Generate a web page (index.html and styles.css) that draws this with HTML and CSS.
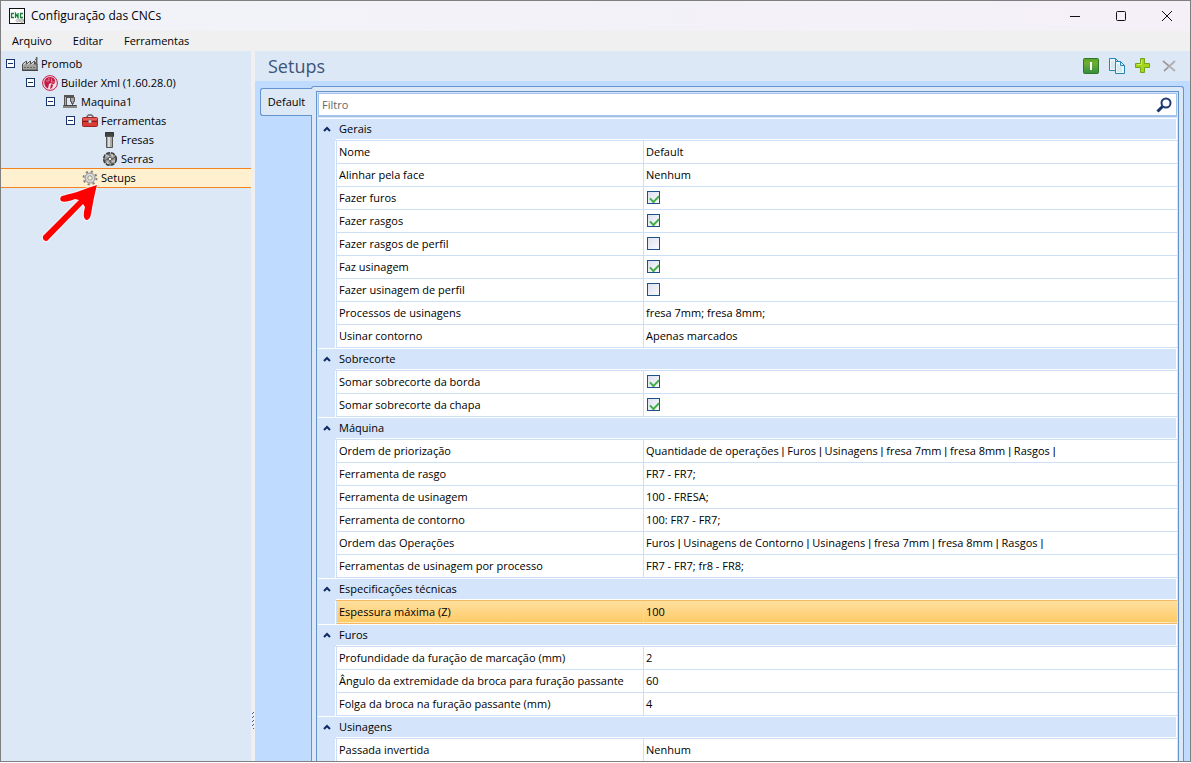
FILE: index.html
```html
<!DOCTYPE html>
<html lang="pt-BR">
<head>
<meta charset="utf-8">
<title>Configuração das CNCs</title>
<link rel="stylesheet" href="styles.css">
</head>
<body>
<div class="window">
  <header class="titlebar">
    <svg class="app-icon" viewBox="0 0 16 16"><rect x=".5" y=".5" width="15" height="15" fill="#fff" stroke="#111"/><path d="M5 5.500H2.500V9.500H5M6.500 10V5.500L9 9.500V5M14 5.500H11.500V9.500H14" fill="none" stroke="#15803a" stroke-width="1.300"/><circle cx="12.500" cy="12.500" r="2" fill="#ccc" stroke="#888" stroke-dasharray="1 1"/><circle cx="8.500" cy="12.500" r="1.500" fill="#ddd" stroke="#999" stroke-dasharray="1 1"/></svg>
    <h1 class="caption">Configuração das CNCs</h1>
    <div class="window-buttons">
      <button aria-label="Minimizar"><svg viewBox="0 0 12 12"><path d="M1 6.500H11" stroke="#111"/></svg></button>
      <button aria-label="Maximizar"><svg viewBox="0 0 12 12"><rect x="1.500" y="1.500" width="9" height="9" rx="1" fill="none" stroke="#111"/></svg></button>
      <button aria-label="Fechar"><svg viewBox="0 0 12 12"><path d="M1 1L11 11M11 1L1 11" stroke="#111"/></svg></button>
    </div>
  </header>
  <nav class="menu"><button>Arquivo</button><button>Editar</button><button>Ferramentas</button></nav>
  <div class="body">
    <aside class="sidebar">
      <ul class="tree">
        <li class="node d0"><button class="toggle" aria-label="Recolher Promob"></button><svg viewBox="0 0 16 16"><path d="M13 1h2.500v13H13z" fill="#666"/><path d="M13.500 1v5" stroke="#ccc" stroke-dasharray="2 1"/><path d="M.5 14V8l4-3v3l4-3v3l4-3v3H15v6z" fill="#a2a29e" stroke="#505050"/><path d="M1.500 8.500l2.500-2M5.500 8.500l2.500-2M9.500 8.500l2.500-2" stroke="#eee"/><path d="M2 11.500h12" stroke="#666" stroke-dasharray="2 1"/><path d="M0 14.500h16" stroke="#444"/></svg><span>Promob</span></li>
        <li class="node d1"><button class="toggle" aria-label="Recolher Builder Xml"></button><svg viewBox="0 0 16 16"><circle cx="8" cy="8" r="7.400" fill="#f3dfe8" stroke="#c31c46"/><path d="M8 2C4 2 2 5 2.300 8C2.500 11 4 12.500 6 13.500L7 9L9 8L11 9.500L13 8C14 5 12 2 8 2z" fill="#c31c46"/><path d="M7 3v3H4M9.500 3.500v3.500H13" stroke="#ee9aac" stroke-width=".8" fill="none"/><path d="M9 9l2 1-1 3-2 1z" fill="#c31c46"/></svg><span>Builder Xml (1.60.28.0)</span></li>
        <li class="node d2"><button class="toggle" aria-label="Recolher Maquina1"></button><svg viewBox="0 0 16 16"><path d="M2 1H12V4H5V11H2z" fill="#555"/><path d="M3.500 3V11" stroke="#aaa"/><path d="M8.500 3.500h4v4h-1v2h-2v-2h-1z" fill="#aaa" stroke="#555"/><path d="M10.500 9v2" stroke="#555"/><path d="M2 11.500h12M1.500 13.500v-2h13v2" fill="none" stroke="#444"/><path d="M1 13h14" stroke="#888" stroke-width="2"/></svg><span>Maquina1</span></li>
        <li class="node d3"><button class="toggle" aria-label="Recolher Ferramentas"></button><svg viewBox="0 0 16 16"><path d="M5 5V3.500L6.500 2h3L11 3.500V5" fill="none" stroke="#666" stroke-width="1.500"/><rect x=".5" y="4.500" width="15" height="9" rx="1" fill="#dc3a37" stroke="#9d2525"/><path d="M1 8.500h14" stroke="#811c1c"/><path d="M1 6h14" stroke="#f28077"/><path d="M6.500 7h3v3h-3z" fill="#ddd" stroke="#777" stroke-width=".6"/></svg><span>Ferramentas</span></li>
        <li class="node d4"><svg viewBox="0 0 16 16"><path d="M3.500 .5h8v4h-8z" fill="#444" stroke="#333"/><path d="M4.500 4.500h6v11h-6z" fill="#aaa" stroke="#555"/><path d="M6 5h2v10H6z" fill="#ddd"/></svg><span>Fresas</span></li>
        <li class="node d4"><svg viewBox="0 0 16 16"><circle cx="8" cy="8" r="6.300" fill="#999" stroke="#3a3a3a" stroke-width="1.600" stroke-dasharray="4 1"/><path d="M3 5q3-1 4 1M10 3q1 3-1 4M13 10q-3 1-4-1M6 13q-1-3 1-4" fill="none" stroke="#e0e0e0"/><path d="M5 3q3 0 3 2M13 6q-1 2-3 2M11 13q-3-1-3-3M3 10q1-2 3-2" fill="none" stroke="#555"/><circle cx="8" cy="8" r="1.800" fill="#eee" stroke="#555"/></svg><span>Serras</span></li>
        <li class="node d3 selected"><svg viewBox="0 0 16 16"><circle cx="8" cy="8" r="6.500" fill="none" stroke="#858585" stroke-width="2" stroke-dasharray="2.200 2.900"/><circle cx="8" cy="8" r="5" fill="#d8d8d8" stroke="#929292"/><circle cx="8" cy="8" r="2.200" fill="#fff0d2" stroke="#999"/></svg><span>Setups</span></li>
      </ul>
      <svg class="pointer" viewBox="0 0 60 64"><path d="M57 4Q47 7 37 11Q25 14 22 15Q19 17 21 20Q25 22 35 18L39 19L3 55Q2 60 7 60L43 23L45 26Q42 37 46 39Q50 39 51 33Q54 15 57 4z" fill="#fd0000" stroke="#fff" stroke-opacity=".7" stroke-width="2" paint-order="stroke"/></svg>
    </aside>
    <div class="splitter"><svg viewBox="0 0 3 18"><path d="M0 3L2 1M0 7L2 5M0 11L2 9M0 15L2 13M0 19L2 17" stroke="#2467c0"/></svg></div>
    <main class="main">
      <div class="head">
        <h2>Setups</h2>
        <div class="tools">
          <button aria-label="Ativar"><svg viewBox="0 0 16 16"><defs><linearGradient id="g" x2="0" y2="1"><stop stop-color="#55a51f"/><stop offset=".3" stop-color="#70ae35"/><stop offset="1" stop-color="#2f8f3b"/></linearGradient></defs><rect x=".5" y=".5" width="15" height="15" rx="1" fill="url(#g)" stroke="#30752b"/><path d="M8 4v8" stroke="#fff" stroke-width="2"/></svg></button>
          <button aria-label="Copiar"><svg viewBox="0 0 16 16"><path d="M.5 .5h6l3 3v9h-9zM6.500 .5v3h3" fill="#edf6fb" stroke="#2386b5"/><path d="M2 4h3M2 6h5M2 8h5M2 10h5" stroke="#b8dbe7"/><path d="M6.500 3.500h5l4 4v8h-9zM11.500 3.500v4h4" fill="#edf6fb" stroke="#2386b5"/><path d="M8 7h2M8 9h5M8 11h5M8 13h5" stroke="#b8dbe7"/></svg></button>
          <button aria-label="Adicionar"><svg viewBox="0 0 16 16"><path d="M5.500 .5h4v5h5v4h-5v5h-4v-5h-5v-4h5z" fill="#a4d51c" stroke="#70a51a"/><path d="M6.500 2v4.500H2" fill="none" stroke="#d0ec68"/></svg></button>
          <button aria-label="Excluir"><svg viewBox="0 0 16 16"><path d="M2 3L14 13M14 3L3 13" stroke="#b2b2b2" stroke-width="2"/><path d="M2 3L8 8M3 13L7 9.500" stroke="#8c8c8c"/></svg></button>
        </div>
      </div>
      <div class="content">
        <div class="tabs"><button class="tab">Default</button></div>
        <section class="page">
          <div class="panel">
            <div class="filter"><input type="text" placeholder="Filtro" aria-label="Filtro"><button aria-label="Pesquisar"><svg viewBox="0 0 16 16"><path d="M7 9L1.500 14.500" stroke="#15326b" stroke-width="3"/><circle cx="10" cy="6" r="4.500" fill="#f7faff" stroke="#203c70" stroke-width="2"/></svg></button></div>
            <table class="grid">
              <colgroup><col class="c-gutter"><col class="c-name"><col></colgroup>
              <tbody>
              <tr class="cat"><td><button aria-label="Recolher Gerais"><svg viewBox="0 0 8 6"><path d="M1 5L4 2L7 5" fill="none" stroke="#0d2c68" stroke-width="2"/></svg></button></td><th colspan="2">Gerais</th></tr>
              <tr><td></td><th>Nome</th><td>Default</td></tr>
              <tr><td></td><th>Alinhar pela face</th><td>Nenhum</td></tr>
              <tr><td></td><th><label for="k1">Fazer furos</label></th><td><input id="k1" type="checkbox" checked></td></tr>
              <tr><td></td><th><label for="k2">Fazer rasgos</label></th><td><input id="k2" type="checkbox" checked></td></tr>
              <tr><td></td><th><label for="k3">Fazer rasgos de perfil</label></th><td><input id="k3" type="checkbox"></td></tr>
              <tr><td></td><th><label for="k4">Faz usinagem</label></th><td><input id="k4" type="checkbox" checked></td></tr>
              <tr><td></td><th><label for="k5">Fazer usinagem de perfil</label></th><td><input id="k5" type="checkbox"></td></tr>
              <tr><td></td><th>Processos de usinagens</th><td>fresa 7mm; fresa 8mm;</td></tr>
              <tr><td></td><th>Usinar contorno</th><td>Apenas marcados</td></tr>
              </tbody>
              <tbody>
              <tr class="cat"><td><button aria-label="Recolher Sobrecorte"><svg viewBox="0 0 8 6"><path d="M1 5L4 2L7 5" fill="none" stroke="#0d2c68" stroke-width="2"/></svg></button></td><th colspan="2">Sobrecorte</th></tr>
              <tr><td></td><th><label for="k6">Somar sobrecorte da borda</label></th><td><input id="k6" type="checkbox" checked></td></tr>
              <tr><td></td><th><label for="k7">Somar sobrecorte da chapa</label></th><td><input id="k7" type="checkbox" checked></td></tr>
              </tbody>
              <tbody>
              <tr class="cat"><td><button aria-label="Recolher Máquina"><svg viewBox="0 0 8 6"><path d="M1 5L4 2L7 5" fill="none" stroke="#0d2c68" stroke-width="2"/></svg></button></td><th colspan="2">Máquina</th></tr>
              <tr><td></td><th>Ordem de priorização</th><td>Quantidade de operações <span class="bar">|</span> Furos <span class="bar">|</span> Usinagens <span class="bar">|</span> fresa 7mm <span class="bar">|</span> fresa 8mm <span class="bar">|</span> Rasgos <span class="bar">|</span></td></tr>
              <tr><td></td><th>Ferramenta de rasgo</th><td>FR7 - FR7;</td></tr>
              <tr><td></td><th>Ferramenta de usinagem</th><td>100 - FRESA;</td></tr>
              <tr><td></td><th>Ferramenta de contorno</th><td>100: FR7 - FR7;</td></tr>
              <tr><td></td><th>Ordem das Operações</th><td>Furos <span class="bar">|</span> Usinagens de Contorno <span class="bar">|</span> Usinagens <span class="bar">|</span> fresa 7mm <span class="bar">|</span> fresa 8mm <span class="bar">|</span> Rasgos <span class="bar">|</span></td></tr>
              <tr><td></td><th>Ferramentas de usinagem por processo</th><td>FR7 - FR7; fr8 - FR8;</td></tr>
              </tbody>
              <tbody>
              <tr class="cat"><td><button aria-label="Recolher Especificações técnicas"><svg viewBox="0 0 8 6"><path d="M1 5L4 2L7 5" fill="none" stroke="#0d2c68" stroke-width="2"/></svg></button></td><th colspan="2">Especificações técnicas</th></tr>
              <tr class="active"><td></td><th>Espessura máxima (Z)</th><td>100</td></tr>
              </tbody>
              <tbody>
              <tr class="cat"><td><button aria-label="Recolher Furos"><svg viewBox="0 0 8 6"><path d="M1 5L4 2L7 5" fill="none" stroke="#0d2c68" stroke-width="2"/></svg></button></td><th colspan="2">Furos</th></tr>
              <tr><td></td><th>Profundidade da furação de marcação (mm)</th><td>2</td></tr>
              <tr><td></td><th>Ângulo da extremidade da broca para furação passante</th><td>60</td></tr>
              <tr><td></td><th>Folga da broca na furação passante (mm)</th><td>4</td></tr>
              </tbody>
              <tbody>
              <tr class="cat"><td><button aria-label="Recolher Usinagens"><svg viewBox="0 0 8 6"><path d="M1 5L4 2L7 5" fill="none" stroke="#0d2c68" stroke-width="2"/></svg></button></td><th colspan="2">Usinagens</th></tr>
              <tr><td></td><th>Passada invertida</th><td>Nenhum</td></tr>
              </tbody>
            </table>
          </div>
        </section>
      </div>
    </main>
  </div>
</div>
</body>
</html>
```
FILE: styles.css
```css
* { box-sizing: border-box; }
body { margin: 0; height: 100vh; padding-bottom: 1px; font: 11px/16px "Open Sans", "Noto Sans", sans-serif; color: #000; }
button { border: 0; padding: 0; background: none; font: inherit; color: inherit; }
svg { display: block; flex: none; }
h1, h2 { margin: 0; font-weight: 400; }

.window { display: flex; flex-direction: column; height: 100%; border: 1px solid #7f7f7f; overflow: hidden; }
.titlebar { display: flex; align-items: center; height: 30px; flex: none; padding-left: 8px; gap: 6px; background: linear-gradient(90deg, #f1f3f9, #f5f0f7); }
.app-icon { width: 16px; height: 16px; }
.caption { font-size: 12px; }
.window-buttons { display: flex; margin-left: auto; }
.window-buttons button { width: 46px; height: 28px; display: grid; place-items: center; }
.window-buttons svg { width: 12px; height: 12px; }
.menu { display: flex; gap: 21px; height: 20px; flex: none; padding-left: 11px; background: #f0f0f0; }

.body { display: flex; flex: 1; min-height: 0; }
.sidebar { position: relative; width: 250px; flex: none; background: #dde8f6; }
.tree { list-style: none; margin: 0; padding: 3px 0 0; }
.node { display: flex; align-items: center; height: 19px; }
.node svg { width: 16px; height: 16px; margin-right: 3px; }
.d0 { padding-left: 5px; }
.d1 { padding-left: 25px; }
.d2 { padding-left: 45px; }
.d3 { padding-left: 65px; }
.d4 { padding-left: 101px; }
.selected { height: 20px; padding-left: 81px; background: #fff0d0; border: solid #f5821f; border-width: 1px 0; }
.toggle { width: 9px; height: 9px; margin-right: 7px; border: 1px solid #17356b; background: linear-gradient(#17356b, #17356b) center / 5px 1px no-repeat #fff; }
.pointer { position: absolute; left: 39px; top: 130px; width: 60px; height: 64px; }
.splitter { width: 4px; flex: none; background: #f0f0f0; display: flex; align-items: flex-end; padding: 0 0 32px 1px; }
.splitter svg { width: 3px; height: 18px; }

.main { flex: 1; min-width: 0; display: flex; flex-direction: column; background: #bfdbff; }
.head { display: flex; align-items: center; justify-content: space-between; height: 30px; flex: none; padding: 0 13px; background: #dde8f6; }
.head h2 { font-size: 18px; line-height: 28px; color: #3b5578; }
.tools { display: flex; gap: 10px; }
.tools svg { width: 16px; height: 16px; }
.content { display: flex; flex: 1; min-height: 0; padding: 5px 6px 0 5px; }
.tabs { flex: none; width: 52px; padding-top: 2px; margin-right: -1px; z-index: 1; }
.tab { width: 52px; height: 28px; border: 1px solid #6593cf; border-right: 0; border-radius: 3px 0 0 3px; background: #dde8f6; }
.page { flex: 1; min-width: 0; display: flex; border: 1px solid #6593cf; border-bottom: 0; border-radius: 3px 3px 0 0; background: #dde8f6; padding: 4px 4px 0; }
.panel { flex: 1; min-width: 0; overflow: hidden; border: 1px solid #6593cf; border-bottom: 0; background: #d4e5fb; padding: 1px 1px 0; }
.filter { display: flex; align-items: center; height: 24px; margin-bottom: 1px; border: 1px solid #a3c3ea; border-width: 1px 1px 2px; background: #fff; }
.filter input { flex: 1; min-width: 0; border: 0; outline: 0; padding: 0 3px; background: none; font: inherit; }
.filter input::placeholder { color: #666; }
.filter button { width: 24px; height: 20px; display: grid; place-items: center; }
.filter svg { width: 16px; height: 16px; }

.grid { width: 100%; table-layout: fixed; border-collapse: separate; border-spacing: 0; }
.c-gutter { width: 18px; }
.c-name { width: 307px; }
.grid td, .grid th { height: 23px; padding: 0 0 0 2px; text-align: left; font-weight: 400; background: #fff; border-bottom: 1px solid #cddff5; white-space: nowrap; overflow: hidden; }
.grid th { border-left: 1px solid #cddff5; }
.grid td:last-child { border-left: 1px solid #cddff5; }
.grid td:first-child { background: #d4e5fb; border-bottom: 0; border-right: 1px solid #fff; }
.grid .cat td, .grid .cat th { background: #d4e5fb; border-left: 0; border-top: 1px solid #fff; border-right: 0; padding-bottom: 2px; }
.grid .cat th { padding-left: 3px; box-shadow: inset -1px -1px #fff; }
.cat button { display: block; padding-left: 3px; }
.cat svg { width: 8px; height: 6px; }
.active th, .active td:last-child { background: linear-gradient(#ffe09e, #ffcb69 95%, #ffe9b8 95%); border-bottom-color: #f7b865; }
.grid .cat:has(+ .active) th { border-bottom-color: #f7b865; }
.grid input { appearance: none; display: block; width: 13px; height: 13px; margin: 0 0 2px 1px; border: 1px solid #1b5289; background: linear-gradient(135deg, #dde1ef, #fafafd); }
.grid input:checked::after { content: ""; display: block; width: 7px; height: 4px; margin: 3px 0 0 2px; border: solid #43ad47; border-width: 0 0 2px 2px; transform: rotate(-45deg); }
.bar { font-family: "Liberation Sans", sans-serif; line-height: 1; }
```
